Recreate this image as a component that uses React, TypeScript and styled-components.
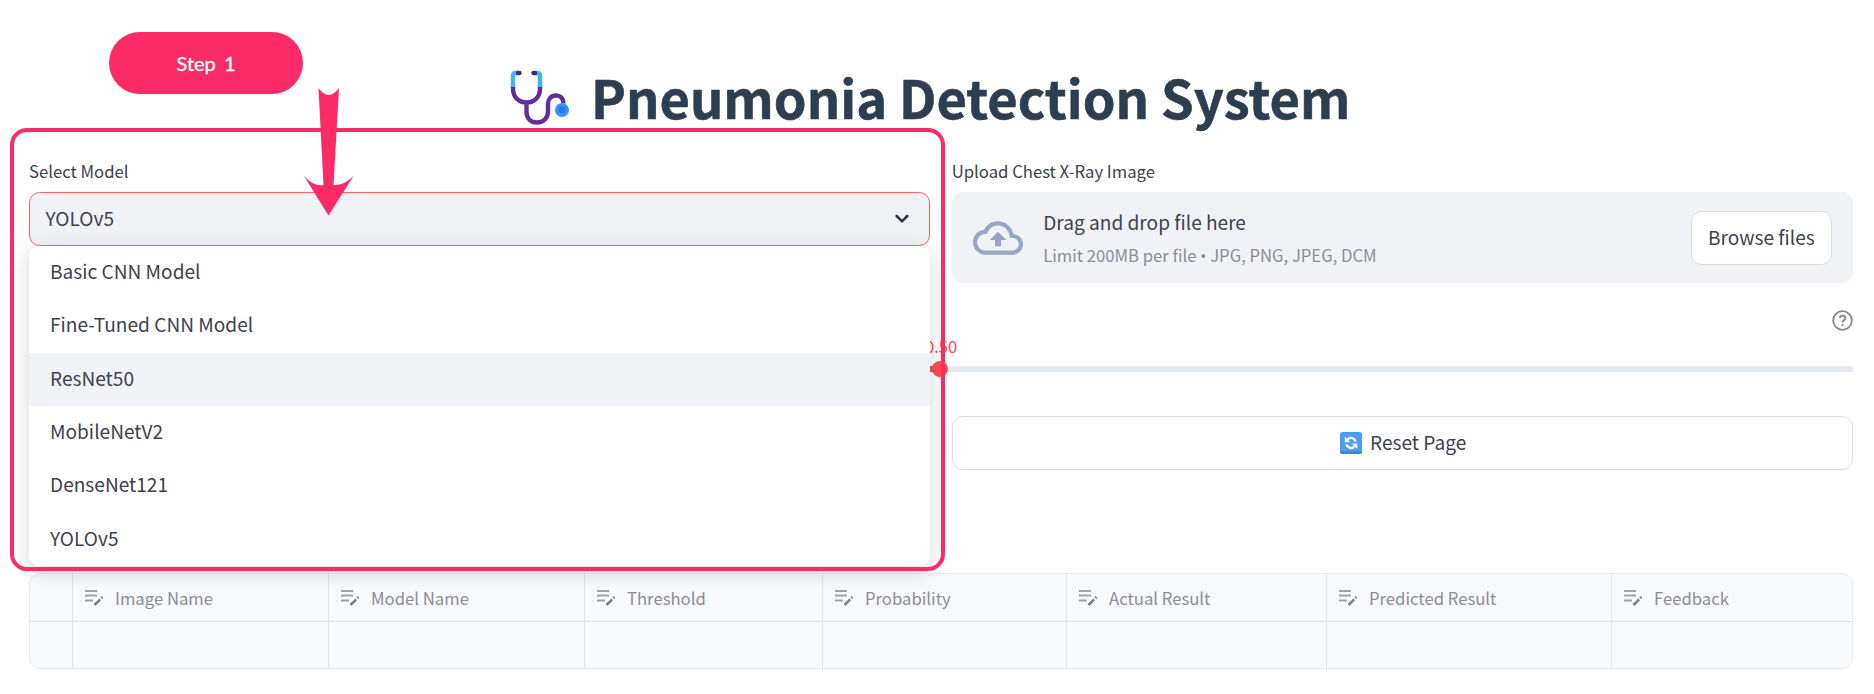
import React from "react";
import styled, { createGlobalStyle } from "styled-components";

const Global = createGlobalStyle`
  * { box-sizing: border-box; }
  body { margin: 0; background: #fff; color: #3f414d; font-family: "Noto Sans CJK SC", "Open Sans", sans-serif; }
`;

const Page = styled.main`
  position: relative;
  width: 1874px;
  height: 694px;
  padding: 64px 21px 0 29px;
  overflow: hidden;
`;

const Title = styled.h1`
  display: flex;
  align-items: center;
  height: 64px;
  margin: 0 0 29px;
  padding-left: 480px;
  font-size: 52.4px;
  line-height: 64px;
  font-weight: 700;
  color: #2c3e50;
  -webkit-text-stroke: 0.6px #2c3e50;
  white-space: nowrap;
  svg { flex: none; margin: 1px 22px 0 0; }
`;

const TitleText = styled.span`
  padding-bottom: 1px;
`;

const Columns = styled.div`
  display: grid;
  grid-template-columns: 900.7px 901px;
  gap: 22px;
`;

const Label = styled.div`
  height: 35px;
  line-height: 28px;
  font-size: 16.7px;
  white-space: nowrap;
`;

const Field = styled.div`position: relative;`;

const SelectBox = styled.div`
  display: flex;
  align-items: center;
  justify-content: space-between;
  height: 54px;
  padding: 0 19.5px 0 15.5px;
  border: 1.33px solid #ff6060;
  border-radius: 10.67px;
  background: #f0f2f6;
  font-size: 19.1px;
  line-height: 50px;
`;

const SelectValue = styled.span`
  padding-bottom: 2px;
`;

const Menu = styled.ul`
  position: absolute;
  z-index: 2;
  top: 89px;
  left: 0;
  width: 901px;
  margin: 0;
  padding: 0;
  list-style: none;
  border-radius: 10.67px;
  background: #fff;
  overflow: hidden;
  box-shadow: 0 5.33px 21.33px rgba(0, 0, 0, 0.16);
`;

const Option = styled.li<{ $active?: boolean }>`
  height: 53.33px;
  padding-left: 21px;
  line-height: 50.6px;
  font-size: 19.1px;
  background: ${(p) => (p.$active ? "#f0f2f6" : "#fff")};
`;

const Dropzone = styled.div`
  display: flex;
  align-items: center;
  height: 91px;
  padding: 0 21px;
  border-radius: 10.67px;
  background: #f0f2f6;
`;

const DropText = styled.div`
  flex: 1;
  margin-left: 20.5px;
  font-size: 19.1px;
  line-height: 32px;
`;

const Hint = styled.div`
  height: 32px;
  padding-top: 2px;
  font-size: 16.67px;
  line-height: 31px;
  color: #8b8d96;
`;

const Dot = styled.span`
  font-family: "Open Sans", sans-serif;
`;

const Button = styled.button`
  display: flex;
  align-items: center;
  justify-content: center;
  gap: 8px;
  height: 54px;
  padding: 0 16px;
  border: 1.33px solid #dcdde0;
  border-radius: 10.67px;
  background: #fff;
  color: #3f414d;
  font: inherit;
  font-size: 19.1px;
  line-height: 32px;
  white-space: nowrap;
`;

const ResetButton = styled(Button)`
  padding-left: 18px;
`;

const ButtonText = styled.span`
  padding-bottom: 2px;
`;

const SliderHead = styled.div`
  display: flex;
  justify-content: flex-end;
  height: 28px;
  margin-top: 27px;
`;

const Slider = styled.div`
  position: relative;
  height: 5.5px;
  margin-top: 28px;
  width: 1824px;
  border-radius: 5px;
  background: linear-gradient(to right, #ff4b4b 50%, #e4e8f1 50%);
`;

const Thumb = styled.div`
  position: absolute;
  left: 903px;
  top: -5px;
  width: 16px;
  height: 16px;
  border-radius: 50%;
  background: #ff4b4b;
`;

const ThumbValue = styled.div`
  position: absolute;
  left: 896px;
  top: -34px;
  font-size: 16.65px;
  line-height: 28px;
  color: #ff4b4b;
`;

const Actions = styled(Columns)`
  margin-top: 44.5px;
`;

const Table = styled.div`
  display: grid;
  grid-template-columns: 43px 256px 256px 238px 244px 260px 285px 1fr;
  grid-template-rows: 48px 46px;
  margin-top: 103px;
  width: 1824px;
  border: 1.33px solid #e9eaed;
  border-radius: 10.67px;
  background: #f8f9fb;
  overflow: hidden;
`;

const Cell = styled.div<{ $head?: boolean; $last?: boolean }>`
  display: flex;
  align-items: center;
  gap: 11px;
  padding: 0 0 0 12px;
  border-right: ${(p) => (p.$last ? 0 : 1)}px solid #e3e4e7;
  border-bottom: ${(p) => (p.$head ? 1 : 0)}px solid #e0e1e4;
  font-size: 16.7px;
  color: #8b8d96;
`;

const Frame = styled.div`
  position: absolute;
  z-index: 3;
  left: 10px;
  top: 128px;
  width: 935px;
  height: 442.500px;
  border: 4px solid #fb2b67;
  border-radius: 17px;
`;

const StepBadge = styled.div`
  position: absolute;
  z-index: 4;
  left: 109px;
  top: 32px;
  width: 194px;
  height: 62px;
  border-radius: 31px;
  background: #fb2b67;
  color: #fff;
  font-family: Lato, sans-serif;
  font-size: 20px;
  -webkit-text-stroke: 0.3px #fff;
  line-height: 63px;
  text-align: center;
  word-spacing: 3px;
`;

const Arrow = styled.svg`
  position: absolute;
  z-index: 4;
  left: 304px;
  top: 88px;
`;

const Stethoscope = () => (
  <svg width="60" height="58" viewBox="0 0 60 58" fill="none" strokeWidth="4.4">
    <path d="M4 19v3c0 9 6 14 13.500 14S31 31 31 22v-3M17.500 36v9c0 7 4.500 11 10.500 11s11-4 11-11V38c0-5.500 3-9 8-9 4.500 0 7.500 3 7.500 8" transform="translate(0 -1.500)" stroke="#5f2f9b" />
    <path d="M9 5H7Q4 5 4 8v11M26 5h2q3 0 3 3v11" stroke="#3db4fb" />
    <path d="M9 5h1.500M26 5h-1.500" stroke="#4b2865" strokeLinecap="round" />
    <circle cx="53" cy="42" r="7" fill="#3793fb" />
    <circle cx="53" cy="42" r="3.600" fill="#2f73ec" />
  </svg>
);

const Chevron = () => (
  <svg width="14" height="10" viewBox="0 0 14 10" fill="none">
    <path d="M1.700 2 7 7.300 12.300 2" stroke="#31333f" strokeWidth="2.500" strokeLinecap="round" />
  </svg>
);

const CloudUpload = () => (
  <svg width="50" height="50" viewBox="0 0 24 24" fill="#98a5c5">
    <path d="M19.350 10.040A7.490 7.490 0 0 0 12 4C9.110 4 6.600 5.640 5.350 8.040A5.994 5.994 0 0 0 0 14c0 3.310 2.690 6 6 6h13c2.760 0 5-2.240 5-5 0-2.640-2.050-4.780-4.650-4.960zM19 18H6c-2.210 0-4-1.790-4-4 0-2.050 1.530-3.760 3.560-3.970l1.070-.110.500-.950A5.469 5.469 0 0 1 12 6c2.620 0 4.880 1.860 5.390 4.430l.300 1.500 1.530.110A2.980 2.980 0 0 1 22 15c0 1.650-1.350 3-3 3zM8 13h2.550v3h2.900v-3H16l-4-4-4 4z" />
  </svg>
);

const Help = () => (
  <svg width="21" height="21" viewBox="0 0 21 21" fill="none" stroke="#85868d" strokeWidth="1.800">
    <circle cx="10.500" cy="10.500" r="9.300" />
    <path d="M7.700 8.100c.3-3.500 5.700-3.300 5.700 0 0 2-2.900 2.200-2.900 4.300M10.500 14v1.900" />
  </svg>
);

const Refresh = () => (
  <svg width="22" height="22" viewBox="0 0 22 22" fill="none">
    <rect width="22" height="22" rx="2.500" fill="#4f9df2" />
    <path d="M0 19h22v.5a2.500 2.500 0 0 1-2.500 2.500h-17A2.500 2.500 0 0 1 0 19.500z" fill="#3f86dd" />
    <path d="M7.500 7.200c3-2.400 7-1.400 8.200 2.300M14.500 14.600c-3 2.400-7 1.400-8.200-2.300" stroke="#fff" strokeWidth="2.400" />
    <path d="M4.800 4.800v5.500h5.500zM17.200 17v-5.500h-5.500z" fill="#fff" />
  </svg>
);

const EditNote = () => (
  <svg width="19" height="17" viewBox="0 0 19 17" fill="none">
    <path d="M0 2h12M0 6.500h12M0 11.500h8" stroke="#a0a1a8" strokeWidth="1.900" />
    <path d="m9.500 16 5.700-5.700M16.300 9.200l1.200-1.200" stroke="#7d7e86" strokeWidth="2.500" />
  </svg>
);

const models = ["Basic CNN Model", "Fine-Tuned CNN Model", "ResNet50", "MobileNetV2", "DenseNet121", "YOLOv5"];
const headings = ["", "Image Name", "Model Name", "Threshold", "Probability", "Actual Result", "Predicted Result", "Feedback"];

export default function App() {
  return (
    <Page>
      <Global />
      <Title><Stethoscope /><TitleText>Pneumonia Detection System</TitleText></Title>
      <Columns>
        <Field>
          <Label>Select Model</Label>
          <SelectBox><SelectValue>YOLOv5</SelectValue><Chevron /></SelectBox>
          <Menu>
            {models.map((m) => <Option key={m} $active={m === "ResNet50"}>{m}</Option>)}
          </Menu>
        </Field>
        <div>
          <Label>Upload Chest X-Ray Image</Label>
          <Dropzone>
            <CloudUpload />
            <DropText>
              Drag and drop file here
              <Hint>Limit 200MB per file <Dot>•</Dot> JPG, PNG, JPEG, DCM</Hint>
            </DropText>
            <Button><ButtonText>Browse files</ButtonText></Button>
          </Dropzone>
        </div>
      </Columns>
      <SliderHead><Help /></SliderHead>
      <Slider><Thumb /><ThumbValue>0.50</ThumbValue></Slider>
      <Actions>
        <div />
        <ResetButton><Refresh /><ButtonText>Reset Page</ButtonText></ResetButton>
      </Actions>
      <Table>
        {headings.map((h, i) => <Cell key={i} $head $last={i === 7}>{h && <EditNote />}{h}</Cell>)}
        {headings.map((_, i) => <Cell key={`e${i}`} $last={i === 7} />)}
      </Table>
      <Frame />
      <StepBadge>Step 1</StepBadge>
      <Arrow width="50" height="128" viewBox="0 0 50 128" fill="#fb2b67">
        <path d="M14.500 0q10 14 20.500 0L29.500 97q10 1 20-9L24.500 127.500 0 88q10 11 19.500 9z" />
      </Arrow>
    </Page>
  );
}
